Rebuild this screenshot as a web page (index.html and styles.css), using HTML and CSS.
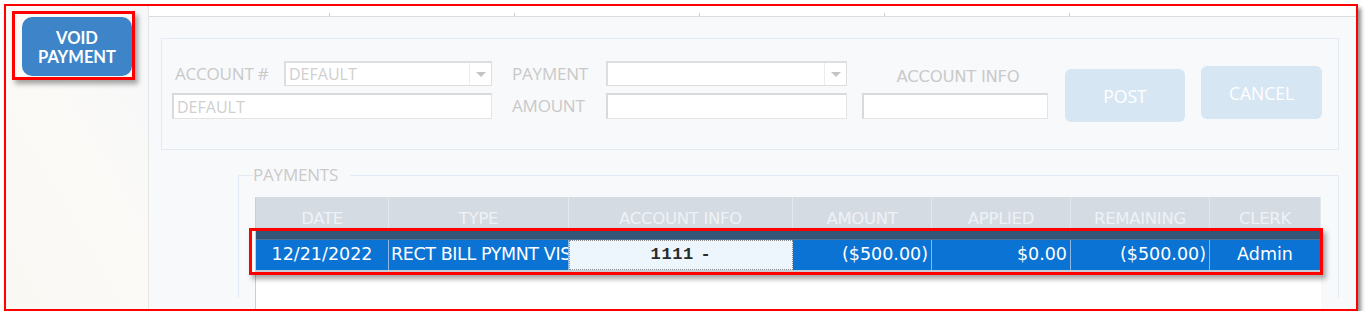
FILE: index.html
```html
<!DOCTYPE html>
<html lang="en">
<head>
    <meta charset="UTF-8">
    <title>Void Payment</title>
    <link rel="stylesheet" href="styles.css">
</head>
<body>
    <div class="frame">
        <div class="sidebar">
            <div class="callout">
                <div class="void-btn">VOID<br>PAYMENT</div>
            </div>
        </div>
        <div class="main">
            <div class="tabs">
                <span class="tab"></span><span class="tab"></span><span class="tab"></span>
                <span class="tab"></span><span class="tab"></span><span class="tab last"></span>
            </div>
            <div class="body">
                <div class="entry">
                    <div class="col-account">
                        <div class="row">
                            <span class="label acct-label">ACCOUNT #</span>
                            <div class="field combo acct-combo"><span>DEFAULT</span><i class="drop"></i></div>
                        </div>
                        <div class="field text acct-name"><span>DEFAULT</span></div>
                    </div>
                    <div class="col-payment">
                        <span class="label">PAYMENT</span>
                        <div class="field combo"><span></span><i class="drop"></i></div>
                        <span class="label">AMOUNT</span>
                        <div class="field text"></div>
                    </div>
                    <div class="col-info">
                        <span class="info-label">ACCOUNT INFO</span>
                        <div class="field text"></div>
                    </div>
                    <div class="action post">POST</div>
                    <div class="action cancel">CANCEL</div>
                </div>

                <fieldset class="payments">
                    <legend>PAYMENTS</legend>
                    <div class="grid">
                        <div class="grid-head">
                            <div class="c c-date">DATE</div>
                            <div class="c c-type">TYPE</div>
                            <div class="c c-info">ACCOUNT INFO</div>
                            <div class="c c-num">AMOUNT</div>
                            <div class="c c-num">APPLIED</div>
                            <div class="c c-num">REMAINING</div>
                            <div class="c c-clerk">CLERK</div>
                        </div>
                        <div class="grid-strip"></div>
                        <div class="grid-row">
                            <div class="c c-date">12/21/2022</div>
                            <div class="c c-type left">RECT BILL PYMNT VISA</div>
                            <div class="c c-info cell-edit">1111 -</div>
                            <div class="c c-num right">($500.00)</div>
                            <div class="c c-num right">$0.00</div>
                            <div class="c c-num right">($500.00)</div>
                            <div class="c c-clerk">Admin</div>
                        </div>
                        <div class="highlight"></div>
                    </div>
                </fieldset>
            </div>
        </div>
    </div>
</body>
</html>
```

FILE: styles.css
```css
body {
    margin: 0;
    background-color: #fff;
    font-family: "Open Sans", sans-serif;
}
.frame {
    margin: 4px 0 0 4px;
    width: 1350px;
    height: 303px;
    border: 2px solid #f00;
    box-shadow: 3px 4px 4px rgba(0, 0, 0, 0.45);
    display: flex;
    overflow: hidden;
    background-color: #fff;
}
.sidebar {
    width: 142px;
    flex-shrink: 0;
    border-right: 1px solid #e6e6e6;
    background: linear-gradient(60deg, #faf8f3 0%, #fbfaf7 50%, #f6f7f9 100%);
}
.callout {
    margin: 5px 0 0 6px;
    width: 110px;
    height: 60px;
    border: 3px solid #f00;
    padding: 3px 0 0 7px;
    box-shadow: 3px 4px 5px rgba(0, 0, 0, 0.35);
    background-color: #fbfaf7;
}
.void-btn {
    width: 110px;
    height: 59px;
    padding-top: 3px;
    box-sizing: border-box;
    border-radius: 10px;
    background-color: #3d85c8;
    color: #fff;
    font-family: Lato, sans-serif;
    font-weight: bold;
    font-size: 16.5px;
    line-height: 19.5px;
    text-align: center;
    display: flex;
    align-items: center;
    justify-content: center;
}
.main {
    flex: 1;
    display: flex;
    flex-direction: column;
    background-color: #f8f9fb;
}
.tabs {
    height: 10px;
    display: flex;
    background-color: #fff;
    border-bottom: 1px solid #dcdcdc;
}
.tab {
    width: 185px;
    height: 10px;
    position: relative;
}
.tab:first-child {
    width: 181px;
}
.tab::after {
    content: "";
    position: absolute;
    right: 0;
    bottom: 0;
    width: 1px;
    height: 3px;
    background-color: #ccc;
}
.tab.last::after {
    display: none;
}
.body {
    padding: 21px 18px 0 12px;
}
.entry {
    height: 112px;
    border: 1px solid #e2eaf3;
    display: flex;
    align-items: flex-start;
    padding: 22px 0 0 10px;
    box-sizing: border-box;
}
.label {
    color: #c9c9c9;
    font-size: 17px;
    line-height: 25px;
    letter-spacing: -0.2px;
}
.field {
    background-color: #fff;
    border: 1px solid #e4e4e4;
    border-top: 2px solid #dadada;
    border-left: 2px solid #dadada;
    box-sizing: border-box;
    color: #cfcfcf;
    font-size: 16px;
    display: flex;
    align-items: center;
    padding-left: 3px;
}
.field span {
    flex: 1;
}
.combo {
    height: 25px;
    border: 2px solid #dedede;
    border-bottom-width: 1px;
    border-right-width: 1px;
}
.drop {
    width: 21px;
    height: 100%;
    border-left: 1px solid #ececec;
    position: relative;
}
.drop::after {
    content: "";
    position: absolute;
    left: 6px;
    top: 9px;
    border-left: 5px solid transparent;
    border-right: 5px solid transparent;
    border-top: 5px solid #c4c4c4;
}
.text {
    height: 26px;
}
.col-account {
    width: 320px;
}
.row {
    display: flex;
}
.acct-label {
    width: 109px;
    padding-left: 3px;
}
.acct-combo {
    width: 208px;
}
.acct-name {
    margin-top: 7px;
}
.col-payment {
    margin-left: 20px;
    display: grid;
    grid-template-columns: 94px 241px;
    row-gap: 7px;
}
.col-info {
    margin-left: 15px;
    width: 186px;
    display: flex;
    flex-direction: column;
}
.info-label {
    color: #cacaca;
    font-family: "DejaVu Sans", sans-serif;
    font-size: 16.5px;
    line-height: 20px;
    margin-top: 6px;
    text-align: center;
    padding-left: 6px;
    letter-spacing: -0.3px;
}
.col-info .text {
    margin-top: 6px;
}
.action {
    background-color: #d7e6f3;
    color: #fff;
    border-radius: 6px;
    height: 53px;
    display: flex;
    align-items: center;
    justify-content: center;
    font-size: 17.5px;
}
.post {
    margin: 8px 0 0 17px;
    width: 120px;
}
.cancel {
    margin: 5px 0 0 16px;
    width: 121px;
}
.payments {
    margin: 15px 0 0 77px;
    border: 1px solid #e2eaf3;
    border-bottom: none;
    padding: 12px 17px 0 16px;
    height: 120px;
}
.payments legend {
    color: #cacaca;
    font-size: 17px;
    line-height: 20px;
    padding: 0 12px 0 0;
    margin-left: -2px;
    letter-spacing: -0.2px;
}
.grid {
    position: relative;
    height: 140px;
    background-color: #fff;
    border-left: 1px solid #cdcdcd;
    font-family: "DejaVu Sans", sans-serif;
}
.grid-head, .grid-row {
    display: flex;
}
.grid-head {
    height: 32px;
    background-color: #d5dbe3;
    color: #eef2f6;
    font-size: 16.5px;
    letter-spacing: -0.3px;
}
.grid-head .c {
    border-right: 1px solid #e4e8ee;
    line-height: 44px;
}
.c {
    box-sizing: border-box;
    text-align: center;
    white-space: nowrap;
    overflow: hidden;
}
.c-date { width: 133px; }
.c-type { width: 180px; }
.c-info { width: 224px; }
.c-num { width: 139px; }
.c-clerk { width: 111px; }
.grid-strip {
    height: 9px;
    margin-top: 1px;
    background-color: #345679;
    border-bottom: 1px solid #4d7399;
}
.grid-row {
    height: 30px;
    background-color: #0a73d4;
    color: #fff;
    font-size: 17.5px;
    border-bottom: 2px solid #c7cdd4;
}
.grid-row .c {
    border-right: 1px solid #8fb8e4;
    line-height: 29px;
}
.grid-row .left {
    text-align: left;
    padding-left: 2px;
    letter-spacing: -0.4px;
}
.grid-row .right {
    text-align: right;
    padding-right: 3px;
}
.grid-row .cell-edit {
    background-color: #eef6fd;
    color: #2a2a2a;
    border: 1px dotted #8a8a8a;
    font-family: "Liberation Mono", monospace;
    font-weight: bold;
    font-size: 17px;
    letter-spacing: 0.6px;
    word-spacing: -4px;
    line-height: 27px;
}
.highlight {
    position: absolute;
    left: -7px;
    top: 31px;
    width: 1074px;
    height: 47px;
    border: 3px solid #f00;
    box-sizing: border-box;
    box-shadow: 3px 4px 5px rgba(0, 0, 0, 0.35);
}
```
